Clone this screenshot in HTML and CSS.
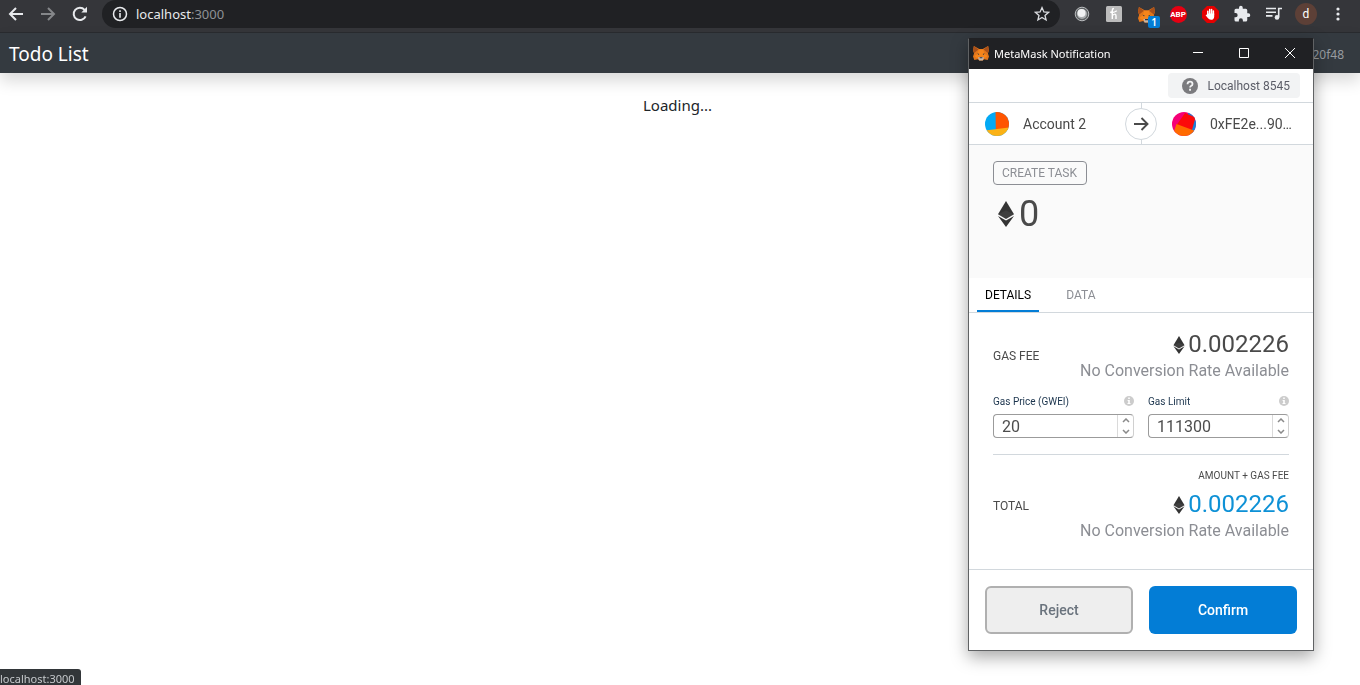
FILE: index.html
```html
<!DOCTYPE html>
<html lang="en">
<head>
<meta charset="utf-8">
<title>Todo List</title>
<link rel="stylesheet" href="styles.css">
</head>
<body>
<svg class="defs" aria-hidden="true">
  <symbol id="eth" viewBox="0 0 16 26">
    <path fill="#343434" d="M8 0 16 13.2 8 18 0 13.2z"/>
    <path fill="#343434" d="M0 14.9 8 19.6 16 14.9 8 26z"/>
    <path fill="#fff" opacity=".06" d="M8 9.6 16 13.2 8 18 0 13.2z"/>
  </symbol>
  <symbol id="fox" viewBox="0 0 18 18">
    <path fill="#e2761b" d="M1 1l6 3.600h4L17 1l1 5-1.200 3.500L18 13l-1.500 4-4-1-1.500 1.500H7L5.500 16l-4 1L0 13l1.200-3.500L0 6z"/>
    <path fill="#a8501a" d="M1 1l5.200 4L1.300 9 0 6zM17 1l-5.200 4 4.900 4L18 6z"/>
    <path fill="#f6851b" d="M6.500 5h5l1.500 5 3.500 2.500-3 2-3-1.500h-3l-3 1.500-3-2L5 10z"/>
    <path fill="#c9b6a6" d="M5.500 14l2-.5h3l2 .5-1.500 3.500H7z"/>
    <path fill="#233447" d="M4.800 9.300l2.200.8-.6 1.100zM13.200 9.300l-2.200.8.6 1.100zM7.600 13.800h2.800l.3 1.200H7.300z"/>
  </symbol>
  <symbol id="info" viewBox="0 0 10 10">
    <circle cx="5" cy="5" r="5" fill="#ccc"/>
    <path fill="#fff" d="M4.200 1.600h1.600v1.400H4.200zM3.600 3.900h2.200v3.200h.7v1H3.500v-1h.7V4.900h-.6z"/>
  </symbol>
</svg>

<header class="toolbar">
  <button class="tool" aria-label="Back"><svg width="16" height="16" viewBox="0 0 16 16" class="line"><path d="M15 8H2M8 2 2 8l6 6"/></svg></button>
  <button class="tool dim" aria-label="Forward"><svg width="16" height="16" viewBox="0 0 16 16" class="line"><path d="M1 8h13M8 2l6 6-6 6"/></svg></button>
  <button class="tool" aria-label="Reload"><svg width="16" height="16" viewBox="0 0 16 16" class="line"><path d="M13.600 10.300A6.200 6.200 0 1 1 12.600 3.800L14 5.200"/><path d="M15 .8V6.500H9.300z" fill="currentColor" stroke="none"/></svg></button>
  <div class="omnibox">
    <svg width="16" height="16" viewBox="0 0 16 16"><circle cx="8" cy="8" r="6.500" fill="none" stroke="#e8eaed" stroke-width="1.500"/><path d="M7.200 4.300h1.600v1.600H7.200zM7.200 7h1.600v4.700H7.200z" fill="#e8eaed"/></svg>
    <span class="url">localhost<span class="port">:3000</span></span>
    <button class="star" aria-label="Bookmark"><svg width="16" height="16" viewBox="0 0 16 16"><path d="M8 1.600l1.900 4.300 4.700.4-3.600 3.100 1.100 4.600L8 11.500 3.900 14 5 9.400 1.400 6.300l4.700-.4z" fill="none" stroke="#dadce0" stroke-width="1.300"/></svg></button>
  </div>
  <div class="extensions">
    <button class="tool" aria-label="Sphere"><svg width="16" height="16" viewBox="0 0 16 16"><circle cx="8" cy="8" r="6.800" fill="#5f6264" stroke="#b9bcbe" stroke-width="1"/><circle cx="8" cy="8" r="5" fill="#a9acae"/><circle cx="7.500" cy="7" r="4" fill="#f1f2f3"/></svg></button>
    <button class="tool" aria-label="Honey"><svg width="16" height="16" viewBox="0 0 16 16"><rect width="16" height="16" rx="1.500" fill="#bcbcbc"/><path d="M6.300 13V4.200q0-1.700 1.700-1.700M6.300 9.500Q10 6.500 10 10v3M4.300 6q3 1.300 6.500-1.200" fill="none" stroke="#fff" stroke-width="1.400"/></svg></button>
    <button class="tool" aria-label="MetaMask"><svg width="17" height="17"><use href="#fox"/></svg><span class="badge">1</span></button>
    <button class="tool" aria-label="Adblock Plus"><span class="abp">ABP</span></button>
    <button class="tool" aria-label="AdBlock"><svg width="17" height="17" viewBox="0 0 17 17"><path d="M5 0h7l5 5v7l-5 5H5l-5-5V5z" fill="#e60000"/><path d="M5.800 9V5.200M7.700 8V3.600M9.600 8V3.600M11.400 9V5" stroke="#fff" stroke-width="1.500" stroke-linecap="round"/><path d="M5 7.500h7.200v3.200Q12 13.800 9 13.800 7 13.800 5.800 12L3.600 9.200 4.500 8.500 5.500 9.300z" fill="#fff"/></svg></button>
    <button class="tool" aria-label="Extensions"><svg width="18" height="18" viewBox="0 0 24 24"><path fill="#e8eaed" d="M20.500 11H19V7a2 2 0 0 0-2-2h-4V3.500a2.500 2.500 0 0 0-5 0V5H4a2 2 0 0 0-2 2v3.800h1.500a2.700 2.700 0 0 1 0 5.400H2V20a2 2 0 0 0 2 2h3.800v-1.500a2.700 2.700 0 0 1 5.400 0V22H17a2 2 0 0 0 2-2v-4h1.500a2.500 2.500 0 0 0 0-5z"/></svg></button>
    <button class="tool" aria-label="Media"><svg width="16" height="16" viewBox="0 0 16 16"><path d="M0 2.500h10M0 6.200h10M0 9.900h6.500" stroke="#e8eaed" stroke-width="1.600"/><path d="M12.700 11.200V2.500H16" fill="none" stroke="#e8eaed" stroke-width="1.600"/><circle cx="11" cy="11.400" r="2.300" fill="#e8eaed"/></svg></button>
    <button class="tool" aria-label="Profile"><span class="profile">d</span></button>
    <button class="tool" aria-label="Menu"><svg width="4" height="16" viewBox="0 0 4 16" fill="#e8eaed"><circle cx="2" cy="3" r="1.600"/><circle cx="2" cy="8" r="1.600"/><circle cx="2" cy="13" r="1.600"/></svg></button>
  </div>
</header>

<nav class="navbar">
  <a class="brand" href="#">Todo List</a>
  <small class="address">20f48</small>
</nav>

<main class="content"><p class="loading">Loading...</p></main>

<div class="status">localhost:3000</div>

<section class="popup" aria-label="MetaMask Notification">
  <div class="titlebar">
    <svg width="16" height="16"><use href="#fox"/></svg>
    <span class="title">MetaMask Notification</span>
    <button class="win" aria-label="Minimize"><svg width="10" height="10" viewBox="0 0 10 10"><path d="M0 4.500h10"/></svg></button>
    <button class="win" aria-label="Maximize"><svg width="10" height="10" viewBox="0 0 10 10"><path d="M.5.5h9v9h-9z"/></svg></button>
    <button class="win" aria-label="Close"><svg width="10" height="10" viewBox="0 0 10 10"><path d="M0 0l10 10M10 0 0 10"/></svg></button>
  </div>

  <div class="network-row">
    <div class="network">
      <svg width="16" height="16" viewBox="0 0 16 16"><circle cx="8" cy="8" r="8" fill="#7b7b7e"/><path d="M5.500 6.200Q5.600 3.700 8 3.700t2.500 2.200Q10.500 7.200 9 8q-.9.500-.9 1.600" fill="none" stroke="#f2f3f4" stroke-width="1.800"/><path d="M7.100 10.800H9v1.900H7.100z" fill="#f2f3f4"/></svg>
      <span>Localhost 8545</span>
    </div>
  </div>

  <div class="parties">
    <div class="party">
      <svg width="24" height="24" viewBox="0 0 24 24"><clipPath id="disc"><circle cx="12" cy="12" r="12"/></clipPath><g clip-path="url(#disc)"><path fill="#03a9f4" d="M0 0h24v24H0z"/><path fill="#ff5500" d="M10.500-1 26-1V18L10.800 17z"/><path fill="#fbb216" d="M0 18.600 24 15.500V24H0z"/></g></svg>
      <span>Account 2</span>
    </div>
    <div class="divider"><span class="arrow"><svg width="16" height="16" viewBox="0 0 16 16"><path d="M1 8h13M8.500 2l6 6-6 6" fill="none" stroke="#4a4a4a" stroke-width="1.900"/></svg></span></div>
    <div class="party recipient">
      <svg width="24" height="24" viewBox="0 0 24 24"><g clip-path="url(#disc)"><path fill="#f50076" d="M0 0h24v24H0z"/><path fill="#1784d8" d="M16 0h8v24h-7z"/><path fill="#fc0a0a" d="M13 1 23.500 5.500 20 18 4 14z"/><path fill="#ff6a00" d="M4.500 12 22 18.500V25H0z"/></g></svg>
      <span>0xFE2e...90…</span>
    </div>
  </div>

  <div class="summary">
    <span class="action">CREATE TASK</span>
    <div class="amount"><svg width="16" height="26"><use href="#eth"/></svg><span>0</span></div>
  </div>

  <div class="tabs" role="tablist">
    <button class="tab active" role="tab" aria-selected="true">DETAILS</button>
    <button class="tab" role="tab" aria-selected="false">DATA</button>
  </div>

  <div class="details">
    <div class="row">
      <span class="label">GAS FEE</span>
      <div class="figures">
        <div class="value"><svg width="12" height="18"><use href="#eth"/></svg><span>0.002226</span></div>
        <div class="rate">No Conversion Rate Available</div>
      </div>
    </div>
    <div class="gas">
      <div class="field">
        <div class="caption"><label for="price">Gas Price (GWEI)</label><svg width="10" height="10"><use href="#info"/></svg></div>
        <div class="box"><input id="price" type="text" inputmode="numeric" value="20">
          <div class="spin"><button aria-label="Increase price"><svg width="8" height="5" viewBox="0 0 8 5"><path d="M1 4l3-3 3 3"/></svg></button><button aria-label="Decrease price"><svg width="8" height="5" viewBox="0 0 8 5"><path d="M1 1l3 3 3-3"/></svg></button></div></div>
      </div>
      <div class="field">
        <div class="caption"><label for="limit">Gas Limit</label><svg width="10" height="10"><use href="#info"/></svg></div>
        <div class="box"><input id="limit" type="text" inputmode="numeric" value="111300">
          <div class="spin"><button aria-label="Increase limit"><svg width="8" height="5" viewBox="0 0 8 5"><path d="M1 4l3-3 3 3"/></svg></button><button aria-label="Decrease limit"><svg width="8" height="5" viewBox="0 0 8 5"><path d="M1 1l3 3 3-3"/></svg></button></div></div>
      </div>
    </div>
    <div class="row total">
      <span class="label">TOTAL</span>
      <div class="figures">
        <div class="note">AMOUNT + GAS FEE</div>
        <div class="value blue"><svg width="12" height="18"><use href="#eth"/></svg><span>0.002226</span></div>
        <div class="rate">No Conversion Rate Available</div>
      </div>
    </div>
  </div>

  <div class="footer">
    <button class="btn reject">Reject</button>
    <button class="btn confirm">Confirm</button>
  </div>
</section>
</body>
</html>
```
FILE: styles.css
```css
* { box-sizing: border-box; }

body {
  margin: 0;
  min-height: 100vh;
  overflow: hidden;
  background: #fff;
  color: #212529;
  font-family: "Noto Sans", "Open Sans", sans-serif;
}

button {
  margin: 0;
  padding: 0;
  border: 0;
  background: none;
  color: inherit;
  font: inherit;
  cursor: pointer;
}

svg { display: block; flex: none; }

.defs { position: absolute; width: 0; height: 0; }

/* Browser toolbar */
.toolbar {
  display: flex;
  height: 33px;
  padding: 0 6px 4px 0;
  background: #35363a;
  border-bottom: 1px solid #292b2f;
}

.tool {
  position: relative;
  display: flex;
  align-items: center;
  justify-content: center;
  width: 32px;
  height: 28px;
  color: #e8eaed;
}

.tool.dim { color: #85878a; }

.line { fill: none; stroke: currentColor; stroke-width: 2; }

.omnibox {
  display: flex;
  flex: 1;
  align-items: center;
  gap: 8px;
  height: 28px;
  margin: 0 6px;
  padding: 0 10px;
  border-radius: 14px;
  background: #202124;
  color: #e8eaed;
  font-size: 13px;
}

.url { flex: 1; }
.port { color: #8e9195; }

.extensions { display: flex; }

.badge {
  position: absolute;
  right: 2px;
  bottom: 0;
  width: 12px;
  height: 12px;
  border-radius: 2px;
  background: #037dd6;
  color: #fff;
  font-size: 10px;
  font-weight: 600;
  line-height: 12px;
}

.abp {
  width: 17px;
  height: 17px;
  border-radius: 50%;
  background: #e60012;
  color: #fff;
  font: 700 8px/17px Roboto, sans-serif;
}

.profile {
  width: 22px;
  height: 22px;
  border-radius: 50%;
  background: #5d4037;
  color: #fff;
  font: 12px/22px Roboto, sans-serif;
}

/* Page */
.navbar {
  display: flex;
  align-items: center;
  justify-content: space-between;
  height: 40px;
  padding: 2px 16px 0 9px;
  background: #343a40;
  box-shadow: 0 8px 16px rgba(0, 0, 0, .15);
}

.brand {
  color: #fff;
  font-size: 19px;
  text-decoration: none;
}

.address { color: #989ca0; font-size: 12px; }

.content { padding: 20px 5px 0 0; }

.loading {
  margin: 0;
  font-size: 15px;
  line-height: 24px;
  text-align: center;
}

.status {
  position: fixed;
  left: 0;
  bottom: 0;
  height: 16px;
  padding-right: 6px;
  border-radius: 0 3px 0 0;
  background: #323639;
  color: #c5c8cb;
  font-size: 11px;
  line-height: 20px;
}

/* Notification window */
.popup {
  position: fixed;
  top: 38px;
  right: 46px;
  width: 346px;
  border: 1px solid #606264;
  border-top-color: #202124;
  background: #fff;
  box-shadow: 0 6px 16px rgba(0, 0, 0, .35);
  color: #4a4a4a;
  font-family: Roboto, sans-serif;
}

.titlebar {
  display: flex;
  align-items: center;
  height: 30px;
  padding: 0 0 2px 4px;
  background: #202124;
  color: #fff;
}

.title {
  flex: 1;
  padding-left: 5px;
  font-family: "Noto Sans", sans-serif;
  font-size: 11px;
}

.win {
  display: flex;
  align-items: center;
  justify-content: center;
  width: 46px;
  height: 28px;
}

.win svg { fill: none; stroke: #fff; stroke-width: 1; }

.network-row {
  display: flex;
  justify-content: flex-end;
  padding: 4px 13px;
  border-bottom: 1px solid #d2d8dd;
}

.network {
  display: flex;
  align-items: center;
  gap: 9px;
  height: 25px;
  padding: 0 10px 0 14px;
  border-radius: 4px;
  background: #f2f3f4;
  color: #5b5d67;
  font-size: 12px;
}

.parties {
  display: grid;
  grid-template-columns: 1fr 32px 1fr;
  height: 42px;
  border-bottom: 1px solid #d2d8dd;
  font-size: 14px;
}

.party {
  display: flex;
  align-items: center;
  gap: 14px;
  padding-left: 16px;
  white-space: nowrap;
}

.recipient { padding-left: 15px; }

.divider {
  display: flex;
  align-items: center;
  background: linear-gradient(#d2d8dd, #d2d8dd) center / 1px 100% no-repeat;
}

.arrow {
  display: flex;
  align-items: center;
  justify-content: center;
  width: 32px;
  height: 32px;
  border: 1px solid #d2d8dd;
  border-radius: 50%;
  background: #fff;
}

.summary {
  height: 133px;
  padding: 16px 24px;
  background: #fafafa;
}

.action {
  display: inline-block;
  padding: 1px 9px 0 8px;
  border: 1px solid #8c8e94;
  border-radius: 4px;
  color: #8c8e94;
  font-size: 12px;
  line-height: 21px;
  vertical-align: top;
}

.amount {
  display: flex;
  align-items: center;
  gap: 5px;
  padding: 8px 5px;
  font-size: 36px;
  line-height: 42px;
}

.tabs {
  display: flex;
  gap: 19px;
  height: 35px;
  padding-left: 8px;
  border-bottom: 1px solid #d2d8dd;
}

.tab {
  padding: 2px 8px 0;
  border-bottom: 2px solid transparent;
  color: #8c8e94;
  font-size: 12px;
}

.tab.active { border-color: #037dd6; color: #000; }

.details { padding: 16px 24px 27px; }

.row {
  display: flex;
  align-items: center;
  justify-content: space-between;
}

.total { padding-top: 15px; }

.label { font-size: 12px; }

.value {
  display: flex;
  align-items: center;
  justify-content: flex-end;
  gap: 3px;
  font-size: 24px;
  line-height: 31px;
}

.blue span { color: #0e91d6; }

.rate {
  color: #8c8e94;
  font-size: 16px;
  line-height: 22px;
}

.gas {
  display: grid;
  grid-template-columns: repeat(2, minmax(0, 1fr));
  gap: 14px;
  padding: 13px 0 16px;
  border-bottom: 1px solid #d2d8dd;
}

.caption {
  display: flex;
  align-items: center;
  justify-content: space-between;
  height: 12px;
  margin-bottom: 7px;
  color: #1b344d;
  font-size: 10px;
}

.box {
  display: flex;
  height: 24px;
  border: 1px solid #9b9b9b;
  border-right-color: #d0d0d0;
  border-radius: 4px;
}

.box input {
  flex: 1;
  min-width: 0;
  padding: 0 8px;
  border: 0;
  outline: 0;
  background: none;
  color: #4d4d4d;
  font: 16px Roboto, sans-serif;
}

.spin {
  display: flex;
  flex-direction: column;
  width: 16px;
  border-left: 1px solid #dadada;
}

.spin button {
  display: flex;
  flex: 1;
  align-items: center;
  justify-content: center;
}

.spin path { fill: none; stroke: #8a8a8a; stroke-width: 1.5; }

.note {
  margin-bottom: 7px;
  font-size: 10px;
  line-height: 12px;
  text-align: right;
}

.footer {
  display: grid;
  grid-template-columns: 1fr 1fr;
  gap: 16px;
  padding: 16px;
  border-top: 1px solid #d2d8dd;
}

.btn {
  height: 48px;
  border-radius: 6px;
  font-size: 14px;
  font-weight: 500;
}

.reject { border: 2px solid #b0b0b0; background: #eee; color: #6a737d; }
.confirm { background: #037dd6; color: #fff; }
```
